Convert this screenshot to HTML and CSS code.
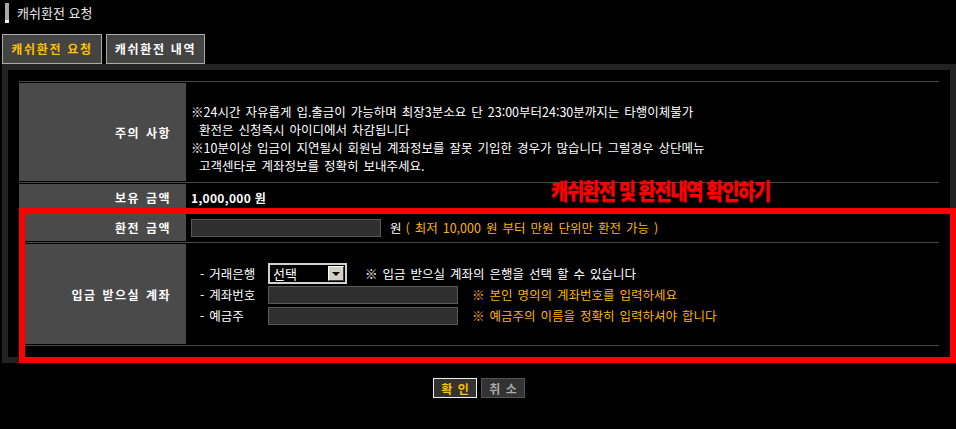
FILE: index.html
```html
<!DOCTYPE html>
<html lang="ko">
<head>
<meta charset="utf-8">
<title>캐쉬환전 요청</title>
<link rel="stylesheet" href="styles.css">
</head>
<body>
<div class="page">
  <div class="title"><span class="title-bar"></span><span class="title-text">캐쉬환전 요청</span></div>
  <div class="tabs">
    <div class="tab tab-on">캐쉬환전 요청</div>
    <div class="tab tab-2">캐쉬환전 내역</div>
  </div>
  <div class="panel">
    <div class="sep"></div>
    <div class="row r1">
      <div class="lbl">주의 사항</div>
      <div class="val notice">
        <p>※24시간 자유롭게 입.출금이 가능하며 최장3분소요 단 23:00부터24:30분까지는 타행이체불가</p>
        <p class="ind">환전은 신청즉시 아이디에서 차감됩니다</p>
        <p>※10분이상 입금이 지연될시 회원님 계좌정보를 잘못 기입한 경우가 많습니다 그럴경우 상단메뉴</p>
        <p class="ind">고객센타로 계좌정보를 정확히 보내주세요.</p>
      </div>
    </div>
    <div class="sep"></div>
    <div class="row r2">
      <div class="lbl">보유 금액</div>
      <div class="val"><span class="money">1,000,000 원</span></div>
    </div>
    <div class="sep"></div>
    <div class="row r3">
      <div class="lbl">환전 금액</div>
      <div class="val">
        <input class="inp" type="text">
        <span class="won">원</span>
        <span class="hint">( 최저 10,000 원 부터 만원 단위만 환전 가능 )</span>
      </div>
    </div>
    <div class="sep"></div>
    <div class="row r4">
      <div class="lbl">입금 받으실 계좌</div>
      <div class="val acct">
        <div class="acct-line l1">
          <span class="acct-lbl">- 거래은행</span>
          <div class="sel"><span class="sel-text">선택</span><span class="sel-btn"></span></div>
          <span class="note-w">※ 입금 받으실 계좌의 은행을 선택 할 수 있습니다</span>
        </div>
        <div class="acct-line l2">
          <span class="acct-lbl">- 계좌번호</span>
          <input class="inp" type="text">
          <span class="note-y">※ 본인 명의의 계좌번호를 입력하세요</span>
        </div>
        <div class="acct-line l3">
          <span class="acct-lbl">- 예금주</span>
          <input class="inp" type="text">
          <span class="note-y">※ 예금주의 이름을 정확히 입력하셔야 합니다</span>
        </div>
      </div>
    </div>
    <div class="sep"></div>
  </div>
  <div class="btns">
    <div class="btn btn-ok">확 인</div>
    <div class="btn btn-cancel">취 소</div>
  </div>
  <div class="annot-box"></div>
  <div class="annot-text">캐쉬환전 및 환전내역 확인하기</div>
</div>
</body>
</html>
```

FILE: styles.css
```css
* { box-sizing: border-box; }
html, body { margin: 0; padding: 0; background: #000; }
body {
  font-family: "Noto Sans CJK KR", "Noto Sans", sans-serif;
  font-size: 12px;
  color: #fff;
}
p { margin: 0; }

.page { position: relative; width: 956px; height: 429px; overflow: hidden; }

.title { display: flex; align-items: center; height: 20px; margin-top: 3px; padding-left: 5px; }
.title-bar { width: 4px; height: 20px; background: linear-gradient(#a8a8a8 0 17px, #f2f2f2 17px); }
.title-text { margin-left: 8px; font-size: 13px; line-height: 20px; color: #e8e8e8; letter-spacing: 0; }

.tabs { display: flex; gap: 4px; margin-top: 11px; padding-left: 2px; }
.tab {
  width: 100px; height: 30px;
  border: 1px solid #a9aca4;
  background: #444;
  font-weight: bold; letter-spacing: 1.7px;
  color: #fff;
  display: flex; align-items: center; justify-content: center;
  padding-bottom: 2px;
}
.tab-2 { width: 99px; }
.tab-on { color: #ffc000; }

.panel { margin-left: 2px; width: 954px; border: 6px solid #222; padding: 11px; background: #000; }
.sep { height: 1px; background: #474747; }
.row { display: flex; margin: 1px 0; }
.r1 { height: 98px; }
.r2 { height: 27px; }
.r3 { height: 27px; }
.r4 { height: 100px; }

.lbl {
  width: 167px; flex: none;
  background: #4a4a4a;
  font-weight: bold; letter-spacing: 1.5px; word-spacing: 1px;
  display: flex; align-items: center; justify-content: flex-end;
  padding-right: 15px;
}
.val {
  flex: 1; display: flex; align-items: center; padding-left: 5px;
  font-size: 12.5px; word-spacing: 1.5px;
}

.notice { display: block; padding-top: 20px; line-height: 18px; }
.notice .ind { padding-left: 8px; }

.money { font-size: 12px; font-weight: bold; letter-spacing: 0.3px; word-spacing: 0; }

.inp {
  width: 190px; height: 18px; margin: 0; padding: 0;
  background: #2f2f2f; border: 1px solid #595959; outline: none;
}
.won { margin-left: 9px; }
.hint { margin-left: 4px; color: #ffb400; }

.acct { flex-direction: column; align-items: flex-start; justify-content: center; padding-left: 14px; }
.acct-line { display: flex; align-items: center; }
.l1 { height: 21px; }
.l2 { margin-top: 1px; }
.l3 { margin-top: 2px; }
.acct-lbl { width: 68px; }

.sel {
  width: 79px; height: 21px;
  border: 2px solid #d0d0d0;
  background: #000;
  display: flex; align-items: center;
  padding-right: 1px;
}
.sel-text { flex: 1; padding-left: 3px; font-size: 13px; line-height: 17px; }
.sel-btn {
  width: 16px; height: 15px;
  background: #d4d0c8;
  border: 1px solid; border-color: #ffffff #404040 #404040 #ffffff;
  display: flex; align-items: center; justify-content: center;
}
.sel-btn::after {
  content: ""; width: 0; height: 0;
  border-left: 4px solid transparent; border-right: 4px solid transparent;
  border-top: 4px solid #000;
}
.note-w { margin-left: 18px; }
.note-y { margin-left: 14px; color: #ffb400; }

.btns { display: flex; justify-content: center; gap: 4px; margin-top: 15px; padding-left: 2px; }
.btn {
  width: 44px; height: 20px;
  background: #333; border: 1px solid #555;
  color: #aaa; font-weight: bold; word-spacing: 2px;
  display: flex; align-items: center; justify-content: center;
}
.btn-ok { border-color: #f0f0f0; color: #ffc000; }

.annot-box {
  position: absolute; left: 19px; top: 208px;
  width: 937px; height: 155px;
  border: 6px solid #f00;
}
.annot-text {
  position: absolute; left: 551px; top: 177px;
  font-size: 22px; line-height: 24px; font-weight: 900;
  letter-spacing: -1.5px;
  color: #f00;
  text-shadow: 0 1px 0 #8a0000;
  transform: scaleX(0.85); transform-origin: left top;
  white-space: nowrap;
}
```
